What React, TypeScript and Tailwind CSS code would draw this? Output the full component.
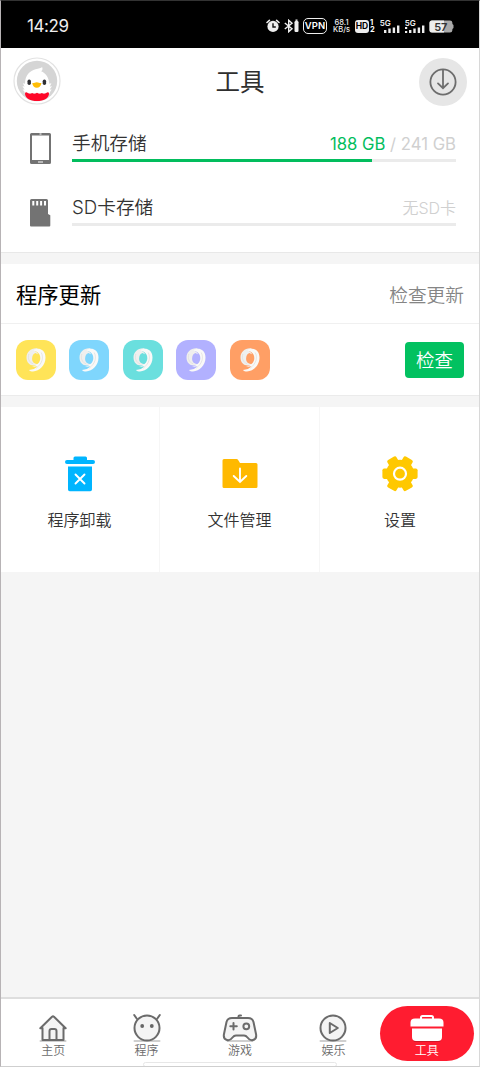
import React from "react";

const appColors = ["bg-[#ffe458]", "bg-[#7fd6fd]", "bg-[#6adfde]", "bg-[#b2b1ff]", "bg-[#ff9f65]"];

function StatusBar() {
  return (
    <div className="flex h-12 shrink-0 items-center bg-black pt-1 pl-[27px] font-normal text-white">
      <span className="w-[239px] text-[17px] leading-5 tracking-[-0.4px] text-[#eee]">14:29</span>
      <svg width="14" height="14" viewBox="0 0 14 14" fill="none">
        <circle cx="7" cy="7.4" r="5.6" fill="#eee" />
        <path d="M1 3.5 3.4 1.3M13 3.5 10.6 1.3" stroke="#eee" strokeWidth="1.6" strokeLinecap="round" />
        <path d="M7 4.3V8h2.8" stroke="#111" strokeWidth="1.4" />
      </svg>
      <svg className="ml-1" width="16" height="14" viewBox="0 0 16 14" fill="none" stroke="#eee" strokeWidth="1.4">
        <path d="M.8 4 8 9.8 4.7 12.7V1.3L8 4.2.8 10" />
        <rect x="10.5" y="2" width="4" height="11" rx="1.2" fill="#eee" stroke="none" />
        <path d="M11.5 1.2h2" />
      </svg>
      <span className="ml-[3px] flex h-4 w-6 items-center justify-center rounded-[5px] border-[1.5px] border-[#eee] text-[9.5px] leading-none font-semibold">VPN</span>
      <span className="ml-1.5 flex w-[17px] flex-col items-center text-[7.5px] leading-[7px] font-medium whitespace-nowrap text-[#eee]">
        <span>68.1</span><span>KB/s</span>
      </span>
      <span className="ml-[5px] flex h-[13px] w-[14px] items-center justify-center rounded-[3px] bg-[#eee] text-[8.5px] leading-none font-bold text-black">HD</span>
      <span className="ml-px flex w-[5px] flex-col text-[7.5px] leading-[7px] font-bold"><span>1</span><span>2</span></span>
      <Signal />
      <Signal dotted />
      <svg className="ml-1" width="25" height="13" viewBox="0 0 25 13">
        <path d="M3 .5h18a2.5 2.5 0 0 1 2.4 2.3V4l1.1 1v3l-1.1 1v1.2a2.5 2.5 0 0 1-2.4 2.3H3A2.5 2.5 0 0 1 .5 10V3A2.5 2.5 0 0 1 3 .5Z" fill="#aaa" />
        <path d="M3 .5h12v12H3A2.5 2.5 0 0 1 .5 10V3A2.5 2.5 0 0 1 3 .5Z" fill="#eee" />
        <text x="11.8" y="10.5" textAnchor="middle" fontSize="11" fontWeight="600" fill="#333">57</text>
      </svg>
    </div>
  );
}

function Signal({ dotted = false }: { dotted?: boolean }) {
  return (
    <svg className="ml-[5px]" width="20" height="15" viewBox="0 0 20 15" fill="#eee">
      <text x="-.3" y="7" fontSize="8" fontWeight="600">5G</text>
      <path d="M4 11h2.4v3H4zM8.3 9.500h2.4V14H8.300zM12.700 8.500h2.4V14h-2.400zM17 6.500h2.4V14H17z" />
      {dotted && <path d="M0 8h2.2v2H0zM0 12h2.2v2H0z" />}
    </svg>
  );
}

function Avatar() {
  return (
    <svg width="48" height="48" viewBox="0 0 48 48">
      <circle cx="24" cy="24" r="23" fill="#fff" stroke="#e2e2e2" strokeWidth="1.2" />
      <circle cx="24" cy="24" r="20.2" fill="#d5d5d5" />
      <path d="M11.8 36.5c.1-2.2-1.7-2.8-2.2-4l2 .1c-.9-1.4-1.8-2-2-3.5l2 .6-1.700-3.400 2.100.500C12 18 17 13.800 22.500 12.300c3.200-.800 5.600-1 6.600-2.200.800 2.100.400 3.200-1 4.100C33 16 36 21 36.300 26.800l2.100-.500-1.700 3.400 2-.600c-.200 1.500-1 2.100-2 3.500l2-.100c-.500 1.200-2 2-1.900 4Z" fill="#fff" />
      <path d="M12 37c0-2 1.500-2.300 2.800-1 1.300 1 3.200 1 4.300 0 1.400.900 3 .900 4.900-.200 1.900 1.100 3.500 1.100 4.900.200 1.100 1 3 1 4.300 0 1.500-1.300 2.800-1 2.800 1-.500 4.500-5.500 7-12 7s-11.500-2.500-12-7Z" fill="#ff0729" />
      <rect x="14.500" y="22.500" width="3.400" height="5.400" rx="1.700" fill="#303034" />
      <rect x="29.700" y="22.500" width="3.400" height="5.400" rx="1.700" fill="#303034" />
      <path d="M19.300 26c1.700.300 2.500-.800 4.500-.800s2.800 1.100 4.600.800c-.300 3-2.200 4.800-4.600 4.800S19.500 29 19.300 26Z" fill="#ffbd05" />
    </svg>
  );
}

function Header() {
  return (
    <header className="flex h-[68px] items-center justify-between pr-[13px] pl-[13px]">
      <div className="mb-0.5"><Avatar /></div>
      <h1 className="text-[24.5px] leading-8 font-normal text-[#2e2e2e]">工具</h1>
      <button className="flex size-12 items-center justify-center rounded-full bg-[#e6e6e6]" aria-label="下载">
        <svg width="28" height="28" viewBox="0 0 28 28" fill="none" stroke="#6d6d6d" strokeWidth="1.8" strokeLinecap="round">
          <circle cx="14" cy="14" r="12.6" />
          <path d="M14 2v18M9 15.400l5 4.800 5-4.800" />
        </svg>
      </button>
    </header>
  );
}

function StorageRow({ icon, name, value, used }: { icon: React.ReactNode; name: string; value: React.ReactNode; used?: boolean }) {
  return (
    <div className="flex h-16 pr-6 pl-[30px]">
      <div className="w-[42px] shrink-0 pt-4">{icon}</div>
      <div className="flex-1">
        <div className="flex h-[43px] items-end justify-between pb-[3px]">
          <span className="text-[18.7px] leading-[24px] text-[#333]">{name}</span>
          <span className="text-[16px] leading-[24px] text-[#d0d0d0]">{value}</span>
        </div>
        <div className="h-[3px] bg-[#ebebeb]">{used && <div className="h-full w-[78%] bg-[#02bd5d]" />}</div>
      </div>
    </div>
  );
}

const PhoneIcon = () => (
  <svg width="21" height="32" viewBox="0 0 21 32">
    <path fillRule="evenodd" d="M1.500 1h18A1.500 1.500 0 0 1 21 2.500v28a1.500 1.500 0 0 1-1.500 1.500h-18A1.500 1.500 0 0 1 0 30.500v-28A1.500 1.500 0 0 1 1.500 1ZM2 3.500v24.500h17V3.500Z" fill="#737373" />
    <path d="M9.500 2h2M8 30h5" stroke="white" strokeWidth="1" />
  </svg>
);

const CardIcon = () => (
  <svg className="mt-[3px]" width="21" height="28" viewBox="0 0 21 28">
    <path d="M1.500 0h15A1.500 1.500 0 0 1 18 1.500V15l2.300 1.300v10.200a1 1 0 0 1-1 1H1a1 1 0 0 1-1-1v-25A1.500 1.500 0 0 1 1.500 0Z" fill="#737373" />
    <path d="M3.300 2v4.500M7.200 2v4.500M11.100 2v4.500M15 2v4.500" stroke="white" strokeWidth="2" />
  </svg>
);

function AppTile({ color }: { color: string }) {
  return (
    <div className={`flex size-10 items-center justify-center rounded-[12px] ${color}`}>
      <svg width="20" height="24" viewBox="0 0 20 24">
        <path d="M11 .3C5-.2.5 4 .500 9.500c0 5 3.300 8.300 8 8 1.700-.1 2.800-.5 4-1.400C8.500 16.200 6 14 6.100 10.500c.1-3 1.400-4.800 3.300-5.400l2.600 1.200c-.5-1.900-2-2.700-3.300-3L13.500 2.500Z" fill="#efefee" />
        <path d="M7.500 2.300C11-.800 19.500.500 19.500 9.500c0 8-6 13.500-12.500 14-1.700 0-3.200-.5-4-1.600 3.800-.1 6.500-1.300 8.300-3.600L6 19c5.200-1.700 8.300-4.700 8.300-8.800 0-3.700-1.800-6-6.800-7.900Z" fill="#f9f9f8" />
        <path d="M15.200 4.500c2.900 5.500.6 11.500-5.200 15.800M2.800 6c-1.300 4.500.4 8.500 4.300 9.800" fill="none" stroke="#deddda" strokeWidth=".7" />
      </svg>
    </div>
  );
}

const TrashIcon = () => (
  <svg width="36" height="36" viewBox="0 0 36 36" fill="#00b5ff">
    <path d="M11.500 4V2q0-1.500 1.500-1.500h10.500Q25 .5 25 2v2h6a2 2 0 0 1 0 4H5a2 2 0 0 1 0-4Z" />
    <path d="M6 10.500h24v23a1.700 1.700 0 0 1-1.700 1.700H7.700A1.700 1.700 0 0 1 6 33.500Z" />
    <path d="m13.500 18.500 9 9m0-9-9 9" stroke="white" strokeWidth="1.900" strokeLinecap="round" />
  </svg>
);

const FolderIcon = () => (
  <svg width="36" height="36" viewBox="0 0 36 36">
    <path d="M2 3h12.500q1 0 1.500.8L18 7h16a1.500 1.500 0 0 1 1.500 1.500v22A1.500 1.500 0 0 1 34 32H2a1.500 1.500 0 0 1-1.500-1.500v-26A1.500 1.500 0 0 1 2 3Z" fill="#ffb900" />
    <path d="M18 12.500V26m-6.300-6L18 26l6.300-6" fill="none" stroke="white" strokeWidth="1.900" strokeLinecap="round" />
  </svg>
);

const GearIcon = () => (
  <svg width="36" height="36" viewBox="0 0 36 36">
    <g fill="#ffc800">
      <circle cx="18" cy="17.700" r="14" />
      <rect x=".4" y="12.500" width="35.200" height="10.400" rx="1.800" />
      <rect x=".2" y="12.500" width="35.600" height="10.400" rx="1.800" transform="rotate(60 18 17.700)" />
      <rect x=".2" y="12.500" width="35.600" height="10.400" rx="1.800" transform="rotate(120 18 17.700)" />
    </g>
    <circle cx="18" cy="17.700" r="6" fill="none" stroke="white" strokeWidth="2.200" />
  </svg>
);

const tools = [
  { name: "程序卸载", icon: <TrashIcon /> },
  { name: "文件管理", icon: <FolderIcon /> },
  { name: "设置", icon: <GearIcon /> },
];

const navItems = [
  { name: "主页", icon: <><path d="M5.500 14v12h21V14M3.300 14.200 15 2.800q1-.8 2 0l11.700 11.400M3.300 14.200h2.200m21 0h2.200" fill="#f4f4f4" /><path d="M12.500 26v-9q0-2 2-2h3q2 0 2 2v9" /></> },
  { name: "程序", icon: <><path d="M6 5 3.200 1M26 5l2.800-4" /><circle cx="16" cy="14" r="12.500" fill="#f4f4f4" /><circle cx="11.200" cy="12" r="1.900" fill="#666" stroke="none" /><circle cx="20.800" cy="12" r="1.900" fill="#666" stroke="none" /></> },
  { name: "游戏", icon: <><path d="M14.500 4V2.500q0-1 1-1H17" /><path d="M8 4h16q4.500 0 5.500 4l2.500 12q1 5-3 6-3 1-5.500-2.500-1.500-2-3.500-2h-8q-2 0-3.500 2Q6 27 3 26q-4-1-3-6L2.500 8q1-4 5.500-4Z" fill="#f4f4f4" /><path d="M9.500 9v6.500M6.300 12.300h6.500" /><circle cx="22.300" cy="12.300" r="2.900" /></> },
  { name: "娱乐", icon: <><circle cx="16" cy="14" r="12.500" fill="#f4f4f4" /><path d="m12.800 9 8 5-8 5Z" /></> },
  { name: "工具", icon: <><path d="M10 5V3.500Q10 2 11.500 2h9Q22 2 22 3.500V5" /><path d="M4 4.500h24q4.500 0 4.500 4v4h-33v-4q0-4 4.500-4ZM1 14.500h30V23q0 4-4 4H5q-4 0-4-4Z" fill="white" stroke="none" /></> },
];

function NavItem({ name, icon, active }: { name: string; icon: React.ReactNode; active: boolean }) {
  return (
    <a className={active ? "flex h-[55px] flex-col items-center rounded-full bg-[#ff1c30] pt-2 text-white" : "flex h-[55px] flex-col items-center pt-2 text-[#6b6b6b]"}>
      <svg className="overflow-visible" width="32" height="28" viewBox="0 0 32 28" fill="none" stroke="currentColor" strokeWidth="2" strokeLinecap="round" strokeLinejoin="round">
        <path d="M3.500 27h25" stroke={active ? "#cf1727" : "#cfcfcf"} />
        {icon}
      </svg>
      <span className="mt-px text-[12px] leading-4">{name}</span>
    </a>
  );
}

export default function App() {
  return (
    <div className="relative flex h-[1067px] w-[480px] flex-col overflow-hidden bg-[#f5f5f5] font-['Inter','Noto_Sans_CJK_SC',sans-serif] font-[350]">
      <StatusBar />
      <section className="h-[205px] shrink-0 border-b border-[#e8e8e8] bg-white">
        <Header />
        <StorageRow icon={<PhoneIcon />} name="手机存储" value={<span className="text-[16.7px] font-normal"><span className="text-[#02bd5d]">188 GB</span> / 241 GB</span>} used />
        <StorageRow icon={<CardIcon />} name="SD卡存储" value="无SD卡" />
      </section>
      <section className="mt-[11px] h-[132px] shrink-0 border-b border-[#ebebeb] bg-white">
        <div className="flex h-[60px] items-center justify-between border-b border-[#f0f0f0] px-4 pt-1">
          <h2 className="text-[21.3px] font-normal text-black">程序更新</h2>
          <span className="pt-0.5 text-[18.700px] text-[#858585]">检查更新</span>
        </div>
        <div className="flex h-[71px] items-center justify-between px-4">
          <div className="flex gap-[13.400px]">{appColors.map((color) => <AppTile key={color} color={color} />)}</div>
          <button className="h-9 w-[59px] rounded-[4px] bg-[#02c160] text-[18.500px] leading-9 text-white">检查</button>
        </div>
      </section>
      <section className="mt-[11px] grid h-[165px] shrink-0 grid-cols-3 divide-x divide-[#f6f6f6] bg-white">
        {tools.map((tool) => (
          <div key={tool.name} className="flex flex-col items-center pt-[49px]">
            {tool.icon}
            <span className="mt-4 text-[16px] leading-6 text-[#333]">{tool.name}</span>
          </div>
        ))}
      </section>
      <nav className="mt-auto grid h-[70px] shrink-0 grid-cols-5 border-t-2 border-[#dedede] bg-white px-[6.500px] pt-[7px]">
        {navItems.map((item, index) => <NavItem key={item.name} {...item} active={index === 4} />)}
      </nav>
      <div className="absolute bottom-0 left-[143px] h-[5px] w-[194px] rounded-full border border-[#e7e7e7] bg-white" />
      <div className="pointer-events-none absolute inset-0 border border-t-[#333] border-r-[#d8d8d8] border-b-[#cfcfcf] border-l-[#b7b3b5]" />
    </div>
  );
}
